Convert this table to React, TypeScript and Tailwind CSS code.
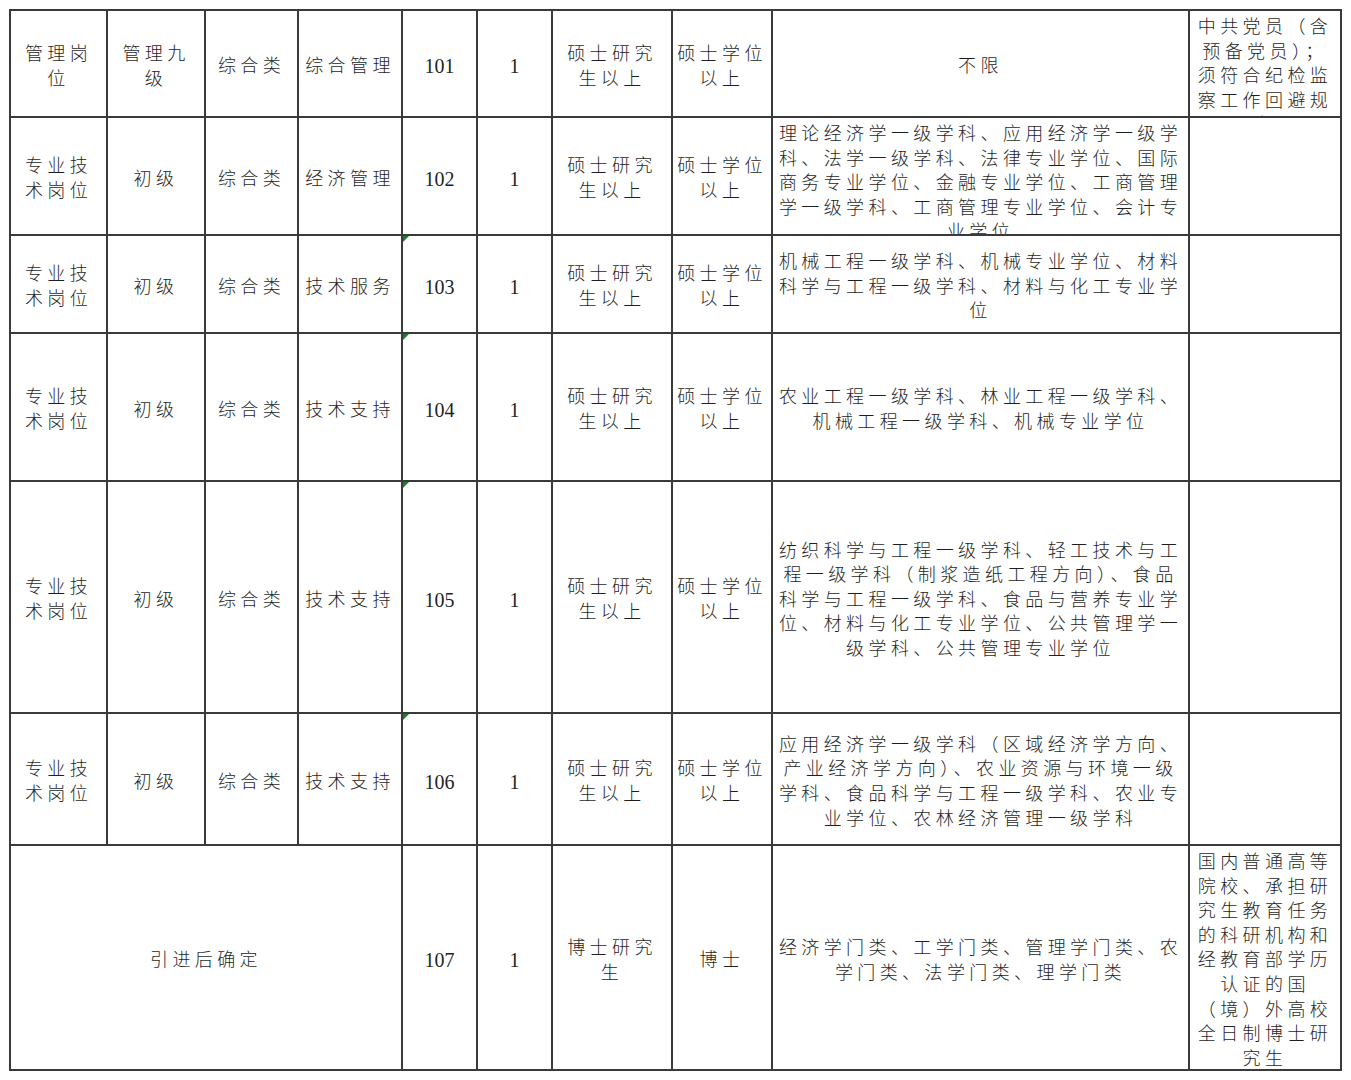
const rows = [
  {
    cells: ["管理岗位", "管理九级", "综合类", "综合管理"],
    code: "101",
    count: "1",
    edu: "硕士研究生以上",
    degree: "硕士学位以上",
    major: "不限",
    note: "中共党员（含预备党员）；须符合纪检监察工作回避规定",
    flag: false,
  },
  {
    cells: ["专业技术岗位", "初级", "综合类", "经济管理"],
    code: "102",
    count: "1",
    edu: "硕士研究生以上",
    degree: "硕士学位以上",
    major:
      "理论经济学一级学科、应用经济学一级学科、法学一级学科、法律专业学位、国际商务专业学位、金融专业学位、工商管理学一级学科、工商管理专业学位、会计专业学位",
    note: "",
    flag: false,
  },
  {
    cells: ["专业技术岗位", "初级", "综合类", "技术服务"],
    code: "103",
    count: "1",
    edu: "硕士研究生以上",
    degree: "硕士学位以上",
    major: "机械工程一级学科、机械专业学位、材料科学与工程一级学科、材料与化工专业学位",
    note: "",
    flag: true,
  },
  {
    cells: ["专业技术岗位", "初级", "综合类", "技术支持"],
    code: "104",
    count: "1",
    edu: "硕士研究生以上",
    degree: "硕士学位以上",
    major: "农业工程一级学科、林业工程一级学科、机械工程一级学科、机械专业学位",
    note: "",
    flag: true,
  },
  {
    cells: ["专业技术岗位", "初级", "综合类", "技术支持"],
    code: "105",
    count: "1",
    edu: "硕士研究生以上",
    degree: "硕士学位以上",
    major:
      "纺织科学与工程一级学科、轻工技术与工程一级学科（制浆造纸工程方向）、食品科学与工程一级学科、食品与营养专业学位、材料与化工专业学位、公共管理学一级学科、公共管理专业学位",
    note: "",
    flag: true,
  },
  {
    cells: ["专业技术岗位", "初级", "综合类", "技术支持"],
    code: "106",
    count: "1",
    edu: "硕士研究生以上",
    degree: "硕士学位以上",
    major:
      "应用经济学一级学科（区域经济学方向、产业经济学方向）、农业资源与环境一级学科、食品科学与工程一级学科、农业专业学位、农林经济管理一级学科",
    note: "",
    flag: true,
  },
];

function Cell({
  children,
  num = false,
  flag = false,
  span = false,
}: {
  children?: React.ReactNode;
  num?: boolean;
  flag?: boolean;
  span?: boolean;
}) {
  return (
    <div
      className={`relative flex flex-col [justify-content:safe_center] overflow-hidden border-r-2 border-b-2 border-[#3a3a3a] px-1 text-center text-[#1f1f1f] ${
        span ? "col-span-4" : ""
      } ${
        num
          ? "pt-[6px] font-['Liberation_Serif','Times_New_Roman',serif] text-[20px] leading-[25px]"
          : "pt-[2px] font-['Noto_Sans_CJK_SC','Noto_Sans_CJK_JP',sans-serif] text-[18px] leading-[24.6px] font-light tracking-[4.4px]"
      }`}
    >
      {flag && (
        <div className="absolute left-0 top-0 h-0 w-0 border-t-[6px] border-r-[6px] border-t-[#1f7a2c] border-r-transparent" />
      )}
      <div>{children}</div>
    </div>
  );
}

export default function App() {
  return (
    <div className="min-h-screen bg-white pl-[9px] pt-[9px]">
      <div className="grid w-max grid-cols-[97px_98px_93px_104px_75px_75px_120px_100px_417px_152px] grid-rows-[107px_118px_98px_148px_232px_132px_225px] border-t-2 border-l-2 border-[#3a3a3a]">
        {rows.map((r) => (
          <>
            {r.cells.map((c, i) => (
              <Cell key={r.code + i}>{c}</Cell>
            ))}
            <Cell num flag={r.flag}>
              {r.code}
            </Cell>
            <Cell num>{r.count}</Cell>
            <Cell>{r.edu}</Cell>
            <Cell>{r.degree}</Cell>
            <Cell>{r.major}</Cell>
            <Cell>{r.note}</Cell>
          </>
        ))}
        <Cell span>引进后确定</Cell>
        <Cell num>107</Cell>
        <Cell num>1</Cell>
        <Cell>博士研究生</Cell>
        <Cell>博士</Cell>
        <Cell>经济学门类、工学门类、管理学门类、农学门类、法学门类、理学门类</Cell>
        <Cell>
          国内普通高等院校、承担研究生教育任务的科研机构和经教育部学历认证的国（境）外高校全日制博士研究生
        </Cell>
      </div>
    </div>
  );
}
